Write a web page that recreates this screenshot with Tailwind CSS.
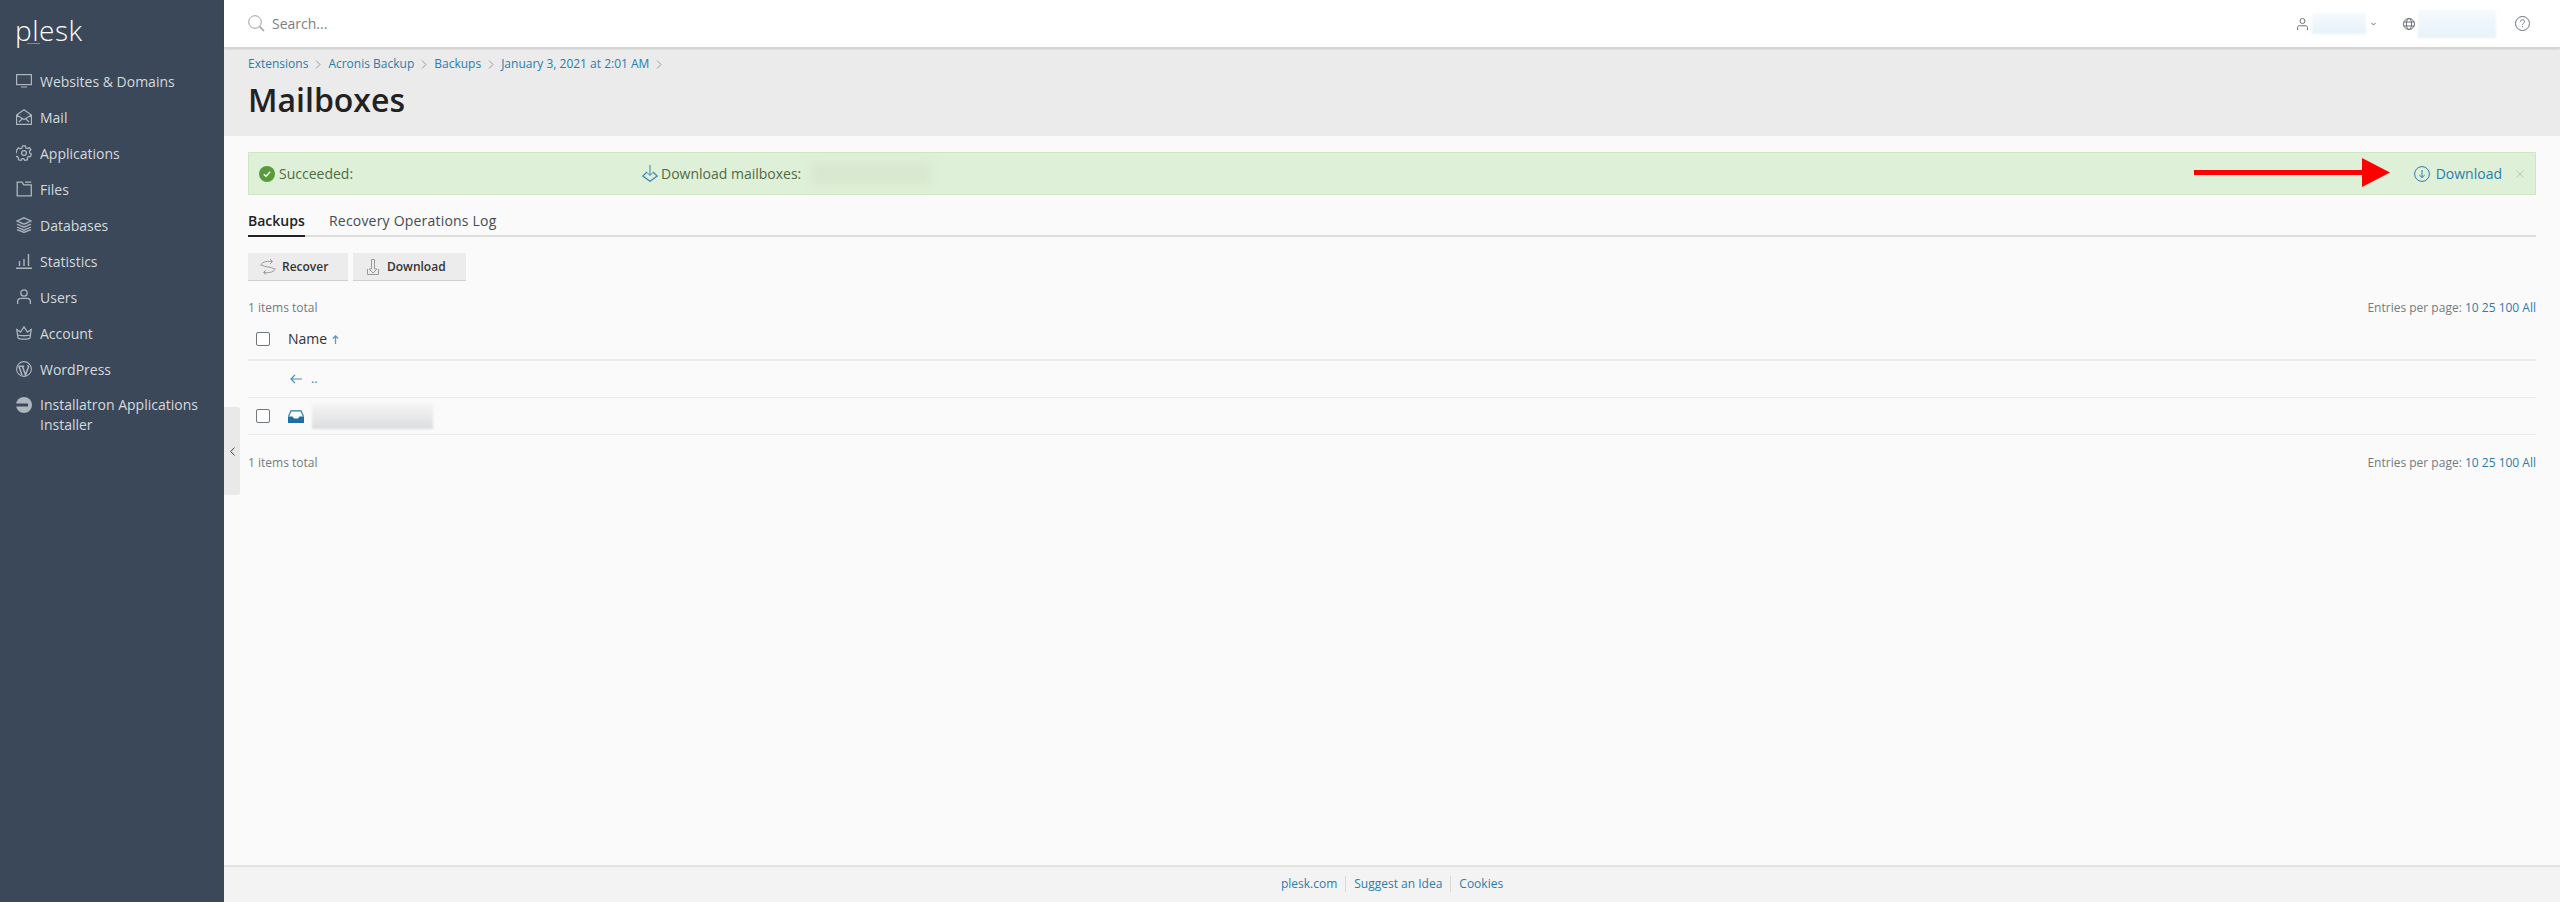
<!DOCTYPE html>
<html lang="en">
<head>
    <meta charset="utf-8">
    <meta name="viewport" content="width=device-width, initial-scale=1.0">
    <title>Mailboxes</title>
    <script src="https://cdn.jsdelivr.net/npm/@tailwindcss/browser@4"></script>
</head>
<body class="font-['Open_Sans',sans-serif] text-[#222] bg-[#fafafa] overflow-hidden">
<div class="relative flex w-[2560px] h-[902px]">

    <!-- sidebar -->
    <aside class="w-[224px] shrink-0 bg-[#3a4859] text-[#d5dade] text-[14px]">
        <div class="relative h-[63px] pl-[15px] pt-[9px]">
            <span class="block text-[28px] leading-[42px] font-light text-white tracking-[0.5px]">plesk</span>
            <span class="absolute left-[27px] top-[43px] w-[13px] h-[1px] bg-[#28aade]"></span>
        </div>
        <nav>
            <a class="flex items-center h-[36px] pl-[16px] gap-[8px]">
                <svg class="w-[16px] h-[16px] shrink-0" viewBox="0 0 16 16" fill="none" stroke="#aeb6bd" stroke-width="1.2"><rect x="0.6" y="1.6" width="14.8" height="10"/><path d="M5 14h6M2 11.5h12" /></svg>
                Websites &amp; Domains</a>
            <a class="flex items-center h-[36px] pl-[16px] gap-[8px]">
                <svg class="w-[16px] h-[16px] shrink-0" viewBox="0 0 16 16" fill="none" stroke="#aeb6bd" stroke-width="1.2"><path d="M0.6 6 8 0.8 15.4 6v9.4H0.6zM0.6 6 8 10.5 15.4 6M3 13l3-3M13 13l-3-3"/></svg>
                Mail</a>
            <a class="flex items-center h-[36px] pl-[16px] gap-[8px]">
                <svg class="w-[16px] h-[16px] shrink-0" viewBox="0 0 16 16" fill="none" stroke="#aeb6bd" stroke-width="1.3"><path d="M6.6 0.8h2.8l.4 2 1.7.8 1.8-1 1.6 2.2-1.5 1.5.3 1.7 1.6 1-.8 2.6-2-.1-1.2 1.3.1 2-2.7.6-1-1.7h-1.6l-1 1.7-2.7-.6.1-2-1.2-1.3-2 .1-.8-2.6 1.6-1 .3-1.7L.8 5l1.6-2.2 1.8 1 1.7-.8z"/><circle cx="8" cy="8" r="2.4"/></svg>
                Applications</a>
            <a class="flex items-center h-[36px] pl-[16px] gap-[8px]">
                <svg class="w-[16px] h-[16px] shrink-0" viewBox="0 0 16 16" fill="none" stroke="#aeb6bd" stroke-width="1.3"><path d="M1.2 1.2h5l1.5 2.6h7.6v11H1.2zM9 1.2h6.3"/></svg>
                Files</a>
            <a class="flex items-center h-[36px] pl-[16px] gap-[8px]">
                <svg class="w-[16px] h-[16px] shrink-0" viewBox="0 0 16 16" fill="none" stroke="#aeb6bd" stroke-width="1.3"><path d="M8 0.8 15 4 8 7.2 1 4zM1 7l7 3.2L15 7M1 10l7 3.2L15 10M1 12.6l7 2.8 7-2.8"/></svg>
                Databases</a>
            <a class="flex items-center h-[36px] pl-[16px] gap-[8px]">
                <svg class="w-[16px] h-[16px] shrink-0" viewBox="0 0 16 16" fill="none" stroke="#aeb6bd" stroke-width="1.4"><path d="M0 15.2h16M3.5 13V8M8 13V6M12.5 13V1"/></svg>
                Statistics</a>
            <a class="flex items-center h-[36px] pl-[16px] gap-[8px]">
                <svg class="w-[16px] h-[16px] shrink-0" viewBox="0 0 16 16" fill="none" stroke="#aeb6bd" stroke-width="1.3"><circle cx="8" cy="4" r="3.2"/><path d="M1.6 15v-2.5c0-2 1.8-3.2 3.5-3.2h5.8c1.7 0 3.5 1.2 3.5 3.2V15"/></svg>
                Users</a>
            <a class="flex items-center h-[36px] pl-[16px] gap-[8px]">
                <svg class="w-[16px] h-[16px] shrink-0" viewBox="0 0 16 16" fill="none" stroke="#aeb6bd" stroke-width="1.3"><path d="M2 13 .8 4.5 4.5 7 8 2l3.5 5 3.7-2.5L14 13c-1.5 1.6-10.500 1.600-12 0zM2 10c2 1 10 1 12 0"/></svg>
                Account</a>
            <a class="flex items-center h-[36px] pl-[16px] gap-[8px]">
                <svg class="w-[16px] h-[16px] shrink-0" viewBox="0 0 16 16" fill="none" stroke="#aeb6bd"><circle cx="8" cy="8" r="7.4" stroke-width="1.1"/><path d="M3 5.500 6 14M6.500 5.500 9.500 14l2.800-7.500c.6-1.500-.3-2-.8-2.500M2.400 5.300h5.800" stroke-width="1.500"/></svg>
                WordPress</a>
            <a class="flex items-start pt-[8px] pb-[8px] pl-[16px] gap-[8px] leading-[20px]">
                <svg class="w-[16px] h-[16px] shrink-0 mt-[2px]" viewBox="0 0 16 16"><circle cx="8" cy="8" r="8" fill="#aeb6bd"/><rect x="0" y="6.500" width="12" height="3" fill="#3a4859"/></svg>
                <span>Installatron Applications<br>Installer</span></a>
        </nav>
    </aside>

    <!-- main -->
    <div class="flex-1 flex flex-col min-w-0">
        <header class="h-[48px] shrink-0 bg-white flex items-center pl-[24px] pr-[30px] border-b border-[#d4d4d4] shadow-[0_1px_2px_rgba(0,0,0,0.15)] z-10">
            <svg class="w-[17px] h-[17px]" viewBox="0 0 17 17" fill="none" stroke="#9aa1a6" stroke-width="1"><circle cx="7" cy="7" r="6.300"/><path d="M11.500 11.500 16 16" stroke-width="1.600"/></svg>
            <span class="ml-[7px] text-[14px] text-[#7a8087]">Search...</span>
            <div class="ml-auto flex items-center">
                <svg class="w-[11px] h-[12px]" viewBox="0 0 11 12" fill="none" stroke="#6b7178"><circle cx="5.500" cy="3" r="2.500"/><path d="M.5 12V9.500c0-1 .8-1.700 1.700-1.700h6.600c.9 0 1.700.7 1.700 1.700V12"/></svg>
                <div class="ml-[4px] w-[54px] h-[21px] bg-linear-to-b from-[#f6fafd] to-[#e6f2fa] blur-[1px]"></div>
                <svg class="ml-[5px] w-[5px] h-[4px]" viewBox="0 0 5 4" fill="none" stroke="#6b7178"><path d="M.3.8 2.500 3 4.700.8"/></svg>
                <svg class="ml-[27px] w-[12px] h-[12px]" viewBox="0 0 12 12" fill="none" stroke="#6b7178"><circle cx="6" cy="6" r="5.500"/><path d="M.5 4h11M.5 8h11"/><ellipse cx="6" cy="6" rx="2.600" ry="5.500"/></svg>
                <div class="ml-[3px] w-[78px] h-[28px] bg-linear-to-b from-[#f6fafd] to-[#e6f2fa] blur-[1px]"></div>
                <svg class="ml-[19px] w-[15px] h-[15px]" viewBox="0 0 15 15" fill="none" stroke="#6b7178"><circle cx="7.500" cy="7.500" r="7"/><path d="M5.500 5.700c0-1.200 1-2 2-2s2 .7 2 1.900c0 1.500-2 1.600-2 3.200"/><path d="M7.500 10.200v1.100"/></svg>
            </div>
        </header>

        <section class="h-[88px] shrink-0 bg-[#ebebeb] pl-[24px]">
            <div class="flex items-center h-[20px] mt-[6px] text-[12px] text-[#2a7cad]">
                <a>Extensions</a>
                <svg class="mx-[7px] w-[6px] h-[9px]" viewBox="0 0 6 9" fill="none" stroke="#9b9b9b"><path d="M1 .5 5 4.500 1 8.500"/></svg>
                <a>Acronis Backup</a>
                <svg class="mx-[7px] w-[6px] h-[9px]" viewBox="0 0 6 9" fill="none" stroke="#9b9b9b"><path d="M1 .5 5 4.500 1 8.500"/></svg>
                <a>Backups</a>
                <svg class="mx-[7px] w-[6px] h-[9px]" viewBox="0 0 6 9" fill="none" stroke="#9b9b9b"><path d="M1 .5 5 4.500 1 8.500"/></svg>
                <a>January 3, 2021 at 2:01 AM</a>
                <svg class="mx-[7px] w-[6px] h-[9px]" viewBox="0 0 6 9" fill="none" stroke="#9b9b9b"><path d="M1 .5 5 4.500 1 8.500"/></svg>
            </div>
            <h1 class="mt-[6px] text-[32px] leading-[40px] font-semibold text-[#222]">Mailboxes</h1>
        </section>

        <main class="flex-1 pl-[24px] pr-[24px] pt-[16px] bg-[#fafafa]">
            <div class="relative flex items-center h-[43px] bg-[#dff0d8] border border-[#cfe6c4] text-[14px] text-[#4f6b45] pl-[10px] pr-[11px]">
                <svg class="w-[16px] h-[16px]" viewBox="0 0 16 16"><circle cx="8" cy="8" r="8" fill="#5b9a3c"/><path d="M4.800 8.300 7 10.300 11.200 5.800" fill="none" stroke="#fff" stroke-width="1.500"/></svg>
                <span class="ml-[4px] w-[363px]">Succeeded:</span>
                <svg class="w-[16px] h-[17px]" viewBox="0 0 16 17" fill="none" stroke="#3b85b5"><path d="M8 0v10M5 7.500 8 10.500 11 7.500"/><path d="M5 7 .8 11 8 16.300 15.200 11 11 7" stroke-width="1.200"/></svg>
                <span class="ml-[3px]">Download mailboxes:</span>
                <div class="ml-[10px] w-[120px] h-[22px] bg-[#d8e8d0] blur-[4px]"></div>
                <div class="ml-auto flex items-center">
                    <svg class="w-[16px] h-[16px]" viewBox="0 0 16 16" fill="none" stroke="#2a7cad"><circle cx="8" cy="8" r="7.400"/><path d="M8 4v7.500M5.300 9 8 11.500 10.700 9"/></svg>
                    <a class="ml-[6px] text-[#2a7cad]">Download</a>
                    <svg class="ml-[14px] w-[8px] h-[8px]" viewBox="0 0 8 8" fill="none" stroke="#bcc9b6"><path d="M.5.5l7 7M7.500.5l-7 7"/></svg>
                </div>
            </div>

            <div class="flex mt-[16px] h-[26px] border-b-2 border-[#dedede] text-[14px] leading-[20px]">
                <a class="h-[26px] font-semibold text-[#222] border-b-2 border-[#222] w-[57px]">Backups</a>
                <a class="ml-[24px] text-[#444c55] font-medium tracking-[0.2px]">Recovery Operations Log</a>
            </div>

            <div class="flex gap-[5px] mt-[16px] text-[12px] font-semibold text-[#333]">
                <button class="flex items-center w-[100px] h-[28px] pl-[12px] bg-[#ececec] border-b border-[#cfcfcf]">
                    <svg class="w-[16px] h-[16px]" viewBox="0 0 16 16" fill="none" stroke="#9a9a9a"><path d="M1 7c0-4 5-5 11-4.500M10 .5 12.500 2.500 10 5M15 9c0 4-5 5-11 4.500M6 11 3.500 13.500 6 15.500M2 6c3 3 9 1 12 4"/></svg>
                    <span class="ml-[6px]">Recover</span>
                </button>
                <button class="flex items-center w-[113px] h-[28px] pl-[14px] bg-[#ececec] border-b border-[#cfcfcf]">
                    <svg class="w-[12px] h-[16px]" viewBox="0 0 12 16" fill="none" stroke="#9a9a9a"><path d="M4.500.5h3V10H10L6 14 2 10h2.500zM.5 10v5.500h11V10"/></svg>
                    <span class="ml-[8px]">Download</span>
                </button>
            </div>

            <div class="flex justify-between items-center mt-[19px] h-[16px] text-[12px] text-[#737a80]">
                <span>1 items total</span>
                <span>Entries per page: <a class="text-[#2a7cad]">10</a> <a class="text-[#2a7cad]">25</a> <a class="text-[#2a7cad]">100</a> <a class="text-[#2a7cad]">All</a></span>
            </div>

            <div class="flex items-center h-[43px] mt-[2px] border-b-2 border-[#ececec] pl-[8px] text-[14px] text-[#333]">
                <span class="w-[14px] h-[14px] border border-[#6f767c] rounded-[2px] bg-white"></span>
                <span class="ml-[18px]">Name</span>
                <svg class="ml-[5px] w-[7px] h-[9px] mt-[1px]" viewBox="0 0 7 9" fill="none" stroke="#5d9cc0" stroke-width="1.300"><path d="M3.500 9V1M.8 3.500 3.500 1l2.700 2.500"/></svg>
            </div>
            <div class="flex items-center h-[37px] border-b border-[#ececec] pl-[42px] text-[12px] text-[#2a7cad]">
                <svg class="w-[12px] h-[10px]" viewBox="0 0 12 10" fill="none" stroke="#4a8fb8" stroke-width="1.200"><path d="M12 5H1M5 .8 1 5l4 4.200"/></svg>
                <a class="ml-[9px]">..</a>
            </div>
            <div class="flex items-center h-[37px] border-b border-[#ececec] pl-[8px]">
                <span class="w-[14px] h-[14px] border border-[#6f767c] rounded-[2px] bg-white"></span>
                <svg class="ml-[18px] w-[16px] h-[13px]" viewBox="0 0 16 13"><path d="M.5 6.500 3 .8h10l2.500 5.700" fill="none" stroke="#28799f" stroke-width="1.200"/><path d="M0 6.500h4.500L6 8.500h4l1.500-2H16V13H0z" fill="#1f6fa5"/></svg>
                <div class="ml-[8px] w-[121px] h-[26px] bg-linear-to-b from-[#f6f6f6] to-[#dcddde] blur-[1px]"></div>
            </div>

            <div class="flex justify-between items-center mt-[20px] h-[16px] text-[12px] text-[#737a80]">
                <span>1 items total</span>
                <span>Entries per page: <a class="text-[#2a7cad]">10</a> <a class="text-[#2a7cad]">25</a> <a class="text-[#2a7cad]">100</a> <a class="text-[#2a7cad]">All</a></span>
            </div>
        </main>

        <footer class="h-[37px] shrink-0 bg-[#f3f3f3] border-t-2 border-[#e2e2e2] flex items-center justify-center pb-[2px] text-[12px] text-[#2a7cad]">
            <a class="pr-[8px]">plesk.com</a>
            <a class="px-[8px] border-l border-[#d8d8d8] leading-[16px]">Suggest an Idea</a>
            <a class="pl-[8px] border-l border-[#d8d8d8] leading-[16px]">Cookies</a>
        </footer>
    </div>

    <!-- sidebar collapse handle -->
    <div class="absolute left-[224px] top-[407px] w-[16px] h-[88px] bg-[#e9e9e9] rounded-r-[3px] flex items-center justify-center">
        <svg class="w-[5px] h-[9px]" viewBox="0 0 5 9" fill="none" stroke="#444"><path d="M4.500.5.800 4.500l3.700 4"/></svg>
    </div>

    <!-- red annotation arrow over the message box -->
    <svg class="absolute left-[2194px] top-[158px] w-[196px] h-[30px]" viewBox="0 0 196 30"><path d="M0 12h168V0l28 14.500L168 29V17H0z" fill="#fe0000"/></svg>
</div>
</body>
</html>
